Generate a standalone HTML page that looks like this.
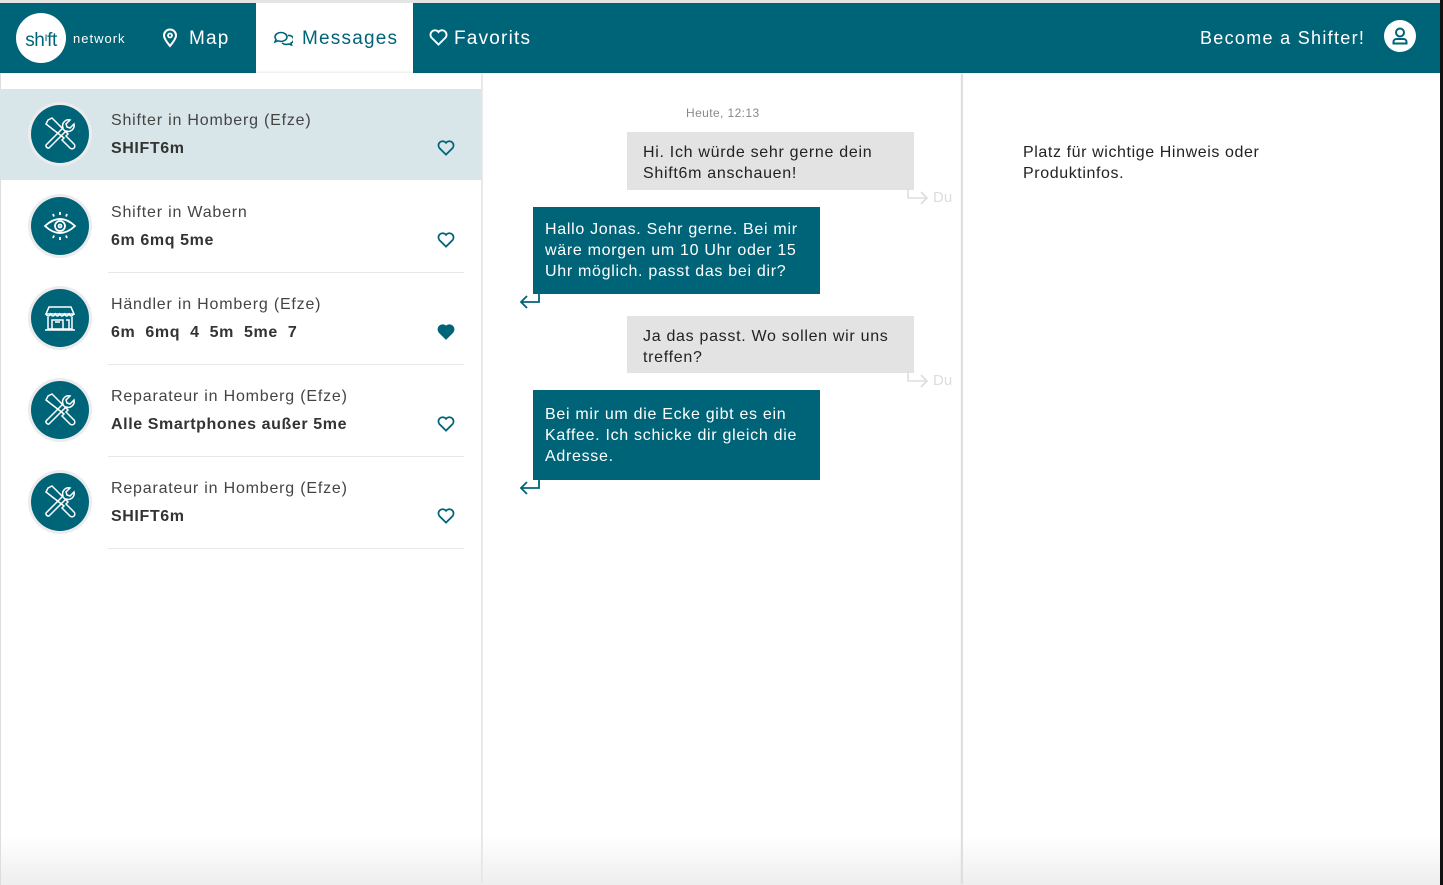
<!DOCTYPE html>
<html><head><meta charset="utf-8"><style>
*{margin:0;padding:0;box-sizing:border-box}
body{width:1443px;height:885px;position:relative;overflow:hidden;background:#fff;font-family:"Liberation Sans",sans-serif;color:#333}
.abs{position:absolute}
.hdr{left:0;top:3px;width:1440px;height:70px;background:#006479}
.top{left:0;top:0;width:1443px;height:3px;background:#e4e4e4}
.rb{left:1440px;top:0;width:3px;height:885px;background:#111}
.nav{color:#fff;font-size:19px;letter-spacing:1.2px;top:28px}
.col{top:73px;height:812px;background:linear-gradient(#fff 94%,#eee)}
.sh{box-shadow:1px 0 3px rgba(0,0,0,.15)}
.item{left:0;width:481px;height:92px}
.circ{width:64px;height:64px;border-radius:50%;background:#ececec;position:absolute;left:28px}
.circ>div{width:58px;height:58px;border-radius:50%;background:#006479;margin:3px;display:flex;align-items:center;justify-content:center}
.t1{position:absolute;left:111px;font-size:16px;color:#444;letter-spacing:.8px}
.t2{position:absolute;left:111px;font-size:16px;font-weight:bold;color:#333;letter-spacing:.6px}
.hr{position:absolute;left:108px;width:356px;height:1px;background:#e8e8e8}
.heart{position:absolute;left:437px}
.b{position:absolute;font-size:16px;line-height:21px;letter-spacing:.7px;padding:10px 10px 0 16px}
.g{background:#e3e3e3;color:#222;left:627px;width:287px}
.tl{background:#006479;color:#fff;left:533px;width:287px;padding-left:12px}
.du{position:absolute;left:906px;color:#ddd;font-size:15px}
</style></head><body>
<div class="abs top"></div>
<div class="abs hdr"></div>
<div class="abs" style="left:256px;top:3px;width:157px;height:70px;background:#fff"></div>
<div class="abs" style="left:16px;top:13px;width:50px;height:50px;border-radius:50%;background:#fff;color:#006479;font-size:19px;text-align:center;line-height:48px;letter-spacing:-.5px">sh<span style="font-size:12px;vertical-align:5px">ı</span>ft</div>
<div class="abs" style="left:73px;top:31px;color:#fff;font-size:13px;letter-spacing:1px">network</div>
<svg class="abs" style="left:162px;top:28px" width="16" height="20" viewBox="0 0 16 20"><path d="M8 18C3 12 2 9.5 2 7.5a6 6 0 0112 0c0 2-1 4.5-6 10.5z" fill="none" stroke="#fff" stroke-width="2"/><circle cx="8" cy="7.5" r="2" fill="none" stroke="#fff" stroke-width="1.8"/></svg>
<div class="abs nav" style="left:189px">Map</div>
<svg class="abs" style="left:273px;top:30px" width="20" height="16" viewBox="0 0 20 16"><path d="M2 7a6 4.5 0 0112 0 6 4.5 0 01-9 3.8L2 12l1-2.5A4.5 4 0 012 7z" fill="none" stroke="#006479" stroke-width="1.6"/><path d="M15 5.5a5 4 0 013 7.5l.5 2-2.5-1a6 4 0 01-7-1" fill="none" stroke="#006479" stroke-width="1.6"/></svg>
<div class="abs nav" style="left:302px;color:#006479">Messages</div>
<svg class="abs" style="left:429px;top:29px" width="19" height="17" viewBox="0 0 20 18"><path d="M10 16.5L2.5 9A4.5 4.5 0 0110 3.2 4.5 4.5 0 0117.5 9z" fill="none" stroke="#fff" stroke-width="2"/></svg>
<div class="abs nav" style="left:454px">Favorits</div>
<div class="abs nav" style="left:1200px;font-size:18px;letter-spacing:1.3px">Become a Shifter!</div>
<div class="abs" style="left:1384px;top:20px;width:32px;height:32px;border-radius:50%;background:#fff"></div>
<svg class="abs" style="left:1384px;top:20px" width="32" height="32" viewBox="0 0 32 32"><circle cx="16" cy="12.5" r="4" fill="none" stroke="#006479" stroke-width="2"/><path d="M9.5 23.5v-1.5a3 3 0 013-3h7a3 3 0 013 3v1.5z" fill="none" stroke="#006479" stroke-width="2"/></svg>

<div class="abs col sh" style="left:0;width:481px;border-left:1px solid #ddd"></div>
<div class="abs col sh" style="left:483px;width:478px"></div>
<div class="abs col" style="left:963px;width:477px;box-shadow:-1px 0 3px rgba(0,0,0,.12)"></div>
<div class="abs rb"></div>

<div class="abs item" style="top:89px;background:#d8e6ea;height:91px"></div>
<div class="circ" style="top:102px"><div><svg width="40" height="40" viewBox="0 0 40 40" fill="none" stroke="#fff" stroke-width="1.5"><path d="M8 6l4-2 16 16 -2 2 2 2 6 6a2 2 0 01-4 4l-6-6-2-2 2-2L6 10z"/><path d="M30 6a6 6 0 00-7 8L6 31a2.5 2.5 0 003 3l17-17a6 6 0 008-7l-4 4-3-1-1-3z"/></svg></div></div>
<div class="t1" style="top:112px">Shifter in Homberg (Efze)</div>
<div class="t2" style="top:140px">SHIFT6m</div>
<svg class="heart" style="top:140px" width="18" height="16" viewBox="0 0 20 18"><path d="M10 16.5L2.5 9A4.5 4.5 0 0110 3.2 4.5 4.5 0 0117.5 9z" fill="none" stroke="#006479" stroke-width="2"/></svg>

<div class="circ" style="top:194px"><div><svg width="40" height="40" viewBox="0 0 40 40" fill="none" stroke="#fff" stroke-width="1.8"><path d="M5 20q15-14 30 0-15 14-30 0z"/><circle cx="20" cy="20" r="5"/><circle cx="20" cy="20" r="1.5"/><path d="M20 6v3M13 8l1 2.5M27 8l-1 2.5M20 31v3M13 32l1-2.5M27 32l-1-2.5"/></svg></div></div>
<div class="t1" style="top:204px">Shifter in Wabern</div>
<div class="t2" style="top:232px">6m 6mq 5me</div>
<svg class="heart" style="top:232px" width="18" height="16" viewBox="0 0 20 18"><path d="M10 16.5L2.5 9A4.5 4.5 0 0110 3.2 4.5 4.5 0 0117.5 9z" fill="none" stroke="#006479" stroke-width="2"/></svg>
<div class="hr" style="top:272px"></div>

<div class="circ" style="top:286px"><div><svg width="40" height="40" viewBox="0 0 40 40" fill="none" stroke="#fff" stroke-width="1.5"><path d="M9 9h22l3 7H6z"/><path d="M6 16q2.3 4 4.6 0 2.3 4 4.6 0 2.3 4 4.6 0 2.3 4 4.6 0 2.3 4 4.6 0 2.3 4 4.6 0"/><path d="M8 19v12h24V19M12 31v-9h11v9M26 22h3v9M5 32h30M15 24l5 0"/></svg></div></div>
<div class="t1" style="top:296px">Händler in Homberg (Efze)</div>
<div class="t2" style="top:324px;word-spacing:5px">6m 6mq 4 5m 5me 7</div>
<svg class="heart" style="top:324px" width="18" height="16" viewBox="0 0 20 18"><path d="M10 16.5L2.5 9A4.5 4.5 0 0110 3.2 4.5 4.5 0 0117.5 9z" fill="#006479" stroke="#006479" stroke-width="2"/></svg>
<div class="hr" style="top:364px"></div>

<div class="circ" style="top:378px"><div><svg width="40" height="40" viewBox="0 0 40 40" fill="none" stroke="#fff" stroke-width="1.5"><path d="M8 6l4-2 16 16 -2 2 2 2 6 6a2 2 0 01-4 4l-6-6-2-2 2-2L6 10z"/><path d="M30 6a6 6 0 00-7 8L6 31a2.5 2.5 0 003 3l17-17a6 6 0 008-7l-4 4-3-1-1-3z"/></svg></div></div>
<div class="t1" style="top:388px">Reparateur in Homberg (Efze)</div>
<div class="t2" style="top:416px">Alle Smartphones außer 5me</div>
<svg class="heart" style="top:416px" width="18" height="16" viewBox="0 0 20 18"><path d="M10 16.5L2.5 9A4.5 4.5 0 0110 3.2 4.5 4.5 0 0117.5 9z" fill="none" stroke="#006479" stroke-width="2"/></svg>
<div class="hr" style="top:456px"></div>

<div class="circ" style="top:470px"><div><svg width="40" height="40" viewBox="0 0 40 40" fill="none" stroke="#fff" stroke-width="1.5"><path d="M8 6l4-2 16 16 -2 2 2 2 6 6a2 2 0 01-4 4l-6-6-2-2 2-2L6 10z"/><path d="M30 6a6 6 0 00-7 8L6 31a2.5 2.5 0 003 3l17-17a6 6 0 008-7l-4 4-3-1-1-3z"/></svg></div></div>
<div class="t1" style="top:480px">Reparateur in Homberg (Efze)</div>
<div class="t2" style="top:508px">SHIFT6m</div>
<svg class="heart" style="top:508px" width="18" height="16" viewBox="0 0 20 18"><path d="M10 16.5L2.5 9A4.5 4.5 0 0110 3.2 4.5 4.5 0 0117.5 9z" fill="none" stroke="#006479" stroke-width="2"/></svg>
<div class="hr" style="top:548px"></div>

<div class="abs" style="left:686px;top:106px;font-size:12px;color:#888;letter-spacing:.4px">Heute, 12:13</div>
<div class="b g" style="top:132px;height:58px">Hi. Ich würde sehr gerne dein Shift6m anschauen!</div>
<svg class="abs" style="left:906px;top:188px" width="24" height="18" viewBox="0 0 24 18"><path d="M2 0v10h19M15 4l6 6-6 6" fill="none" stroke="#ddd" stroke-width="1.6"/></svg>
<div class="du" style="top:189px;left:933px">Du</div>
<div class="b tl" style="top:207px;height:87px;padding-top:12px">Hallo Jonas. Sehr gerne. Bei mir wäre morgen um 10 Uhr oder 15 Uhr möglich. passt das bei dir?</div>
<svg class="abs" style="left:518px;top:292px" width="24" height="18" viewBox="0 0 24 18"><path d="M21 0v10H3M9 4L3 10l6 6" fill="none" stroke="#006479" stroke-width="1.8"/></svg>
<div class="b g" style="top:316px;height:57px">Ja das passt. Wo sollen wir uns treffen?</div>
<svg class="abs" style="left:906px;top:371px" width="24" height="18" viewBox="0 0 24 18"><path d="M2 0v10h19M15 4l6 6-6 6" fill="none" stroke="#ddd" stroke-width="1.6"/></svg>
<div class="du" style="top:372px;left:933px">Du</div>
<div class="b tl" style="top:390px;height:90px;padding-top:14px">Bei mir um die Ecke gibt es ein Kaffee. Ich schicke dir gleich die Adresse.</div>
<svg class="abs" style="left:518px;top:478px" width="24" height="18" viewBox="0 0 24 18"><path d="M21 0v10H3M9 4L3 10l6 6" fill="none" stroke="#006479" stroke-width="1.8"/></svg>

<div class="abs" style="left:1023px;top:142px;font-size:16px;line-height:21px;color:#222;letter-spacing:.6px;width:290px">Platz für wichtige Hinweis oder Produktinfos.</div>
</body></html>
